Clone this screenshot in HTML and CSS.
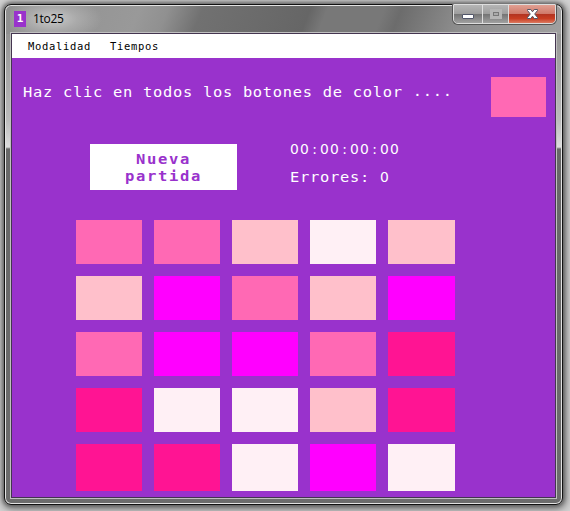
FILE: index.html
```html
<!DOCTYPE html>
<html lang="es">
<head>
<meta charset="utf-8">
<title>1to25</title>
<link rel="stylesheet" href="styles.css">
</head>
<body>
<div class="window">
  <header class="titlebar">
    <span class="app-icon">1</span>
    <span class="title">1to25</span>
    <div class="controls">
      <span class="control"><svg width="28" height="18" viewBox="0 0 28 18"><rect x="8.5" y="9.5" width="11" height="4" rx=".5" fill="#fff" stroke="#505569"/></svg></span>
      <span class="control middle"><svg width="26" height="18" viewBox="0 0 26 18"><rect x="8.5" y="5.5" width="9" height="7" fill="none" stroke="#b5b5b5" stroke-width="3"/><rect x="10.5" y="7.5" width="5" height="3" fill="#aaa" stroke="#777"/></svg></span>
      <span class="control close"><svg width="46" height="18" viewBox="0 0 46 18"><path d="M18.5 4.5h3.3l1.7 2.3 1.7-2.3h3.3v1L25.7 9l2.8 3.5v1h-3.3l-1.7-2.3-1.7 2.3h-3.3v-1L21.3 9l-2.8-3.5z" fill="#fff" stroke="#535666"/></svg></span>
    </div>
  </header>
  <main class="client">
    <nav class="menu"><span>Modalidad</span><span>Tiempos</span></nav>
    <section class="prompt">
      <p class="text">Haz clic en todos los botones de color <span class="dots">....</span></p>
      <div class="sample pink"></div>
    </section>
    <section class="status">
      <button class="new-game"><span>Nueva<br>partida</span></button>
      <div class="stats text">
        <div><span class="num">00<i>:</i>00<i>:</i>00<i>:</i>00</span></div>
        <div>Errores: <span class="num">0</span></div>
      </div>
    </section>
    <section class="board">
      <div class="pink"></div><div class="pink"></div><div class="light"></div><div class="blush"></div><div class="light"></div>
      <div class="light"></div><div class="magenta"></div><div class="pink"></div><div class="light"></div><div class="magenta"></div>
      <div class="pink"></div><div class="magenta"></div><div class="magenta"></div><div class="pink"></div><div class="deep"></div>
      <div class="deep"></div><div class="blush"></div><div class="blush"></div><div class="light"></div><div class="deep"></div>
      <div class="deep"></div><div class="deep"></div><div class="blush"></div><div class="magenta"></div><div class="blush"></div>
    </section>
  </main>
</div>
</body>
</html>
```
FILE: styles.css
```css
* { box-sizing: border-box; }
body {
  margin: 0;
  width: 570px;
  height: 511px;
  padding: 4px 7px 6px 4px;
  overflow: hidden;
  background: #d2d2d2;
}
.window {
  height: 501px;
  border: 1px solid #111;
  border-radius: 7px;
  padding: 0 5px;
  background:
    linear-gradient(112deg, #8f8f8f 0, #999 24%, #909090 29%, #717171 35%, #666 54%, #787878 57%, #787878 67%, #6c6c6c 70%, #8d8d8d 81%, #a0a0a0) 0 0 / 100% 29px no-repeat,
    linear-gradient(#8a8a8a 0, #999 40px, #bbb 115px, #ddd 142px, #686868 144px, #6c6c6c);
  box-shadow: inset 0 0 0 1px #e2e2e2, 0 0 4px 1px #555, 1px 2px 8px 2px #777;
}
.titlebar {
  height: 27px;
  display: flex;
  padding-left: 4px;
  background: radial-gradient(ellipse 50px 22px at 42px 14px, #cacaca 0, #b5b5b5aa 50%, transparent 100%);
}
.app-icon {
  width: 12px;
  height: 16px;
  margin-top: 6px;
  background: #9932cc;
  color: #fff;
  font: bold 11px/16px "DejaVu Sans Mono", monospace;
  text-align: center;
}
.title {
  margin: 6px 0 0 7px;
  font: 12px/16px "Open Sans", sans-serif;
  letter-spacing: -.3px;
  color: #000;
}
.controls {
  display: flex;
  height: 20px;
  margin: -1px 1px 0 auto;
  border: 1px solid #ddd;
  border-radius: 0 0 5px 5px;
  overflow: hidden;
  box-shadow: 0 0 0 1px #555;
  clip-path: inset(0 -1px -1px -1px);
}
.control {
  display: block;
  width: 28px;
  height: 18px;
  background: linear-gradient(#b5b5b5 0, #9d9d9d 50%, #737373 50%, #a0a0a0);
}
.control svg { display: block; }
.middle { width: 27px; border-left: 1px solid #ddd; border-right: 1px solid #ddd; }
.close { width: 46px; background: linear-gradient(#e1a093 0, #cf796a 48%, #b13320 50%, #c83d22 75%, #db7960); }
.client {
  height: 465px;
  border: 1px solid #443550;
  outline: 1px solid #bfbfbf;
  background: #9932cc;
  margin: 1px 1px 0 1px;
}
.menu {
  height: 24px;
  padding-left: 16px;
  display: flex;
  gap: 19px;
  background: #fff;
  color: #000;
  font: 10.5px/25px "DejaVu Sans Mono", monospace;
  letter-spacing: .68px;
}
/* Wide lettering on a 10px character pitch */
.text {
  margin: 0;
  color: #fff;
  font: 13.4px/28px "DejaVu Sans Mono", monospace;
  letter-spacing: .629px;
  white-space: nowrap;
  transform: scaleX(1.15);
  transform-origin: left;
}
.prompt {
  height: 86px;
  display: flex;
  justify-content: space-between;
  padding: 19px 9px 0 11px;
}
.prompt .text { padding-top: 2px; }
.sample { width: 55px; height: 40px; }
.status { height: 76px; display: flex; padding-left: 78px; }
.new-game {
  width: 147px;
  height: 46px;
  border: 0;
  padding: 2px 0 0;
  background: #fff;
  color: #9932cc;
  font: bold 13.5px/17px "DejaVu Sans Mono", monospace;
  letter-spacing: 1.43px;
}
.new-game span { display: block; transform: scaleX(1.15); }
.stats { margin: -8px 0 0 53px; height: 56px; }
.num { font-family: "DejaVu Sans Condensed", "DejaVu Sans", sans-serif; font-stretch: condensed; letter-spacing: 1.025px; }
.num i { display: inline-block; width: 8.696px; padding-left: 2px; font-style: normal; letter-spacing: 0; }
.board {
  display: grid;
  grid-template-columns: 66px 66px 66px 66px 67px;
  grid-template-rows: 44px 44px 44px 44px 47px;
  gap: 12px;
  padding-left: 64px;
}
.pink { background: #ff69b4; }
.light { background: #ffc0cb; }
.blush { background: #fff0f5; }
.magenta { background: #f0f; }
.deep { background: #ff1493; }
.dots { position: relative; top: -1px; }
```
